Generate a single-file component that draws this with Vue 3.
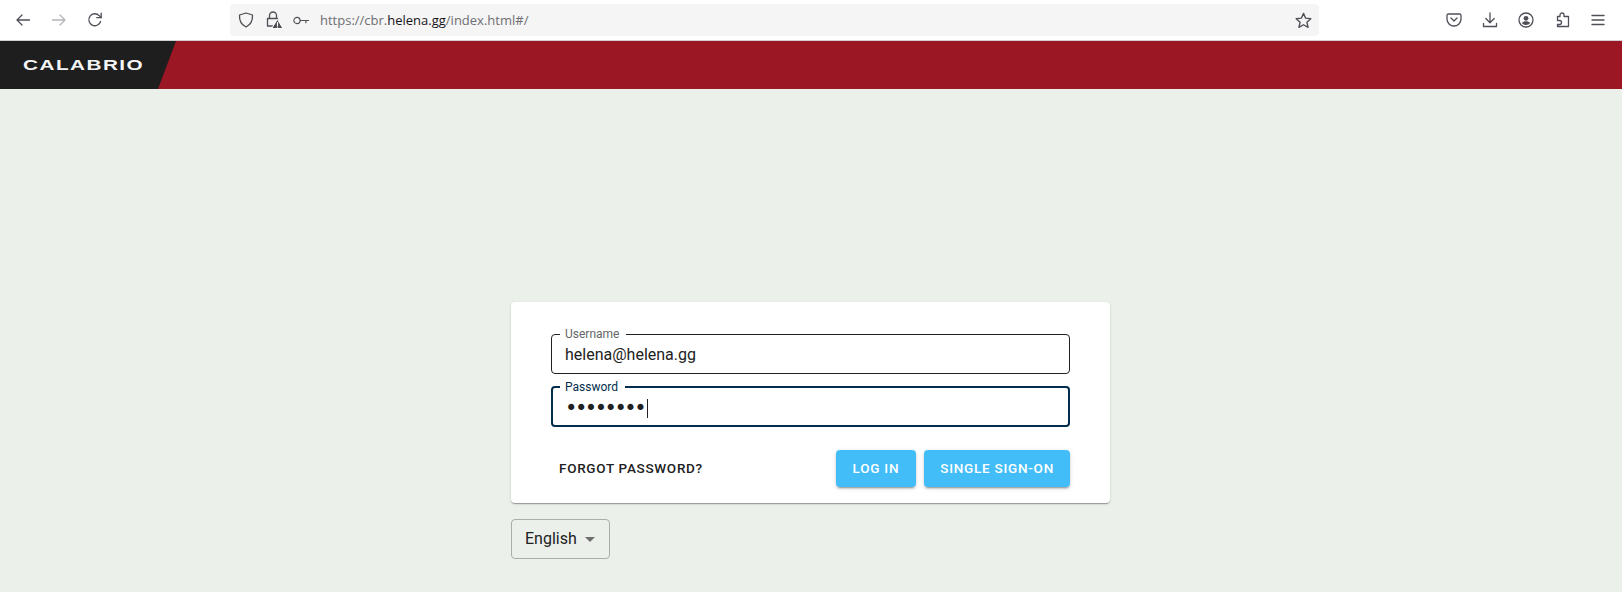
<template>
  <div class="page">
    <div class="toolbar">
      <div class="nav">
        <button class="tb-btn">
          <svg viewBox="0 0 16 16" class="icon"><path d="M14.5 8H2M7 3 2 8l5 5" /></svg>
        </button>
        <button class="tb-btn disabled">
          <svg viewBox="0 0 16 16" class="icon"><path d="M1.5 8H14M9 3l5 5-5 5" /></svg>
        </button>
        <button class="tb-btn">
          <svg viewBox="0 0 16 16" class="icon"><path d="M13.6 9.5A6 6 0 1 1 12.2 3.6L14 5.5" /><path d="M14.2 1.2v4.5H9.800" /></svg>
        </button>
      </div>
      <div class="urlbar">
        <svg viewBox="0 0 16 16" class="icon shield"><path d="M8 1 14.5 3c.3 5.5-1.6 9.600-6.500 12C3.100 12.600 1.200 8.500 1.500 3z" /></svg>
        <svg viewBox="0 0 18 18" class="icon lock">
          <path d="M4.500 7V4.500a3.500 3.500 0 0 1 7 0V7M2.500 7.500h10V15h-10z" />
          <path class="warn" d="M12.500 8.500 18 17.500H7z" />
          <path class="mark" d="M12.500 11.500v3M12.500 15.800v.4" />
        </svg>
        <svg viewBox="0 0 18 10" class="icon key"><circle cx="4.500" cy="5" r="3.500" /><path d="M8 5h9.500M14.500 5v2.500" /></svg>
        <span class="url">https://cbr.<b>helena.gg</b>/index.html#/</span>
        <svg viewBox="0 0 16 16" class="icon star"><path d="m8 1.300 2 4.500 4.900.5-3.700 3.300 1.100 4.800L8 12l-4.300 2.400 1.100-4.800L1.100 6.300 6 5.800z" /></svg>
      </div>
      <div class="tools">
        <svg viewBox="0 0 16 16" class="icon"><path d="M2.500 2h11A1.500 1.500 0 0 1 15 3.500V7a7 7 0 0 1-14 0V3.500A1.500 1.500 0 0 1 2.500 2z" /><path d="m5 6 3 3 3-3" /></svg>
        <svg viewBox="0 0 16 16" class="icon"><path d="M8 1v9.500M3.800 6.500 8 10.700l4.200-4.200M1.500 11.500v3h13v-3" /></svg>
        <svg viewBox="0 0 16 16" class="icon">
          <circle cx="8" cy="8" r="7" />
          <circle class="fill" cx="8" cy="6.300" r="2.400" />
          <path class="fill" d="M3.800 11c1-1.300 2.500-1.800 4.200-1.800s3.200.5 4.200 1.800c-1 1.300-2.500 2-4.200 2s-3.200-.7-4.200-2z" />
        </svg>
        <svg viewBox="0 0 16 16" class="icon"><path d="M6 3.200V3a2 2 0 0 1 4 0v1.500h4.500v10H3.500v-2h2a2 2 0 0 0 0-4h-2v-4H6z" /></svg>
        <svg viewBox="0 0 16 16" class="icon"><path d="M2 3.500h12M2 8h12M2 12.500h12" /></svg>
      </div>
    </div>

    <header class="brandbar">
      <div class="brand"><span class="logo">CALABRIO</span></div>
    </header>

    <main class="content">
      <form class="card" @submit.prevent>
        <fieldset class="field">
          <legend>Username</legend>
          <div class="value">{{ username }}</div>
        </fieldset>
        <fieldset class="field focused">
          <legend>Password</legend>
          <div class="value dots">{{ mask }}<i class="caret"></i></div>
        </fieldset>
        <div class="actions">
          <a class="forgot">FORGOT PASSWORD?</a>
          <div class="buttons">
            <button class="btn login">LOG IN</button>
            <button class="btn sso">SINGLE SIGN-ON</button>
          </div>
        </div>
      </form>
      <div class="lang">
        <span>English</span>
        <i class="arrow"></i>
      </div>
    </main>
  </div>
</template>

<script setup>
const username = 'helena@helena.gg'
const mask = '•'.repeat(8)
</script>

<style>
html, body { margin: 0; height: 100%; background: #ebf0eb; }
</style>

<style scoped>
.page {
  width: 1622px;
  height: 592px;
  overflow: hidden;
  background: #ebf0eb;
  font-family: Roboto, "Liberation Sans", sans-serif;
  color: #212121;
}

.toolbar {
  height: 40px;
  box-sizing: content-box;
  display: flex;
  align-items: center;
  background: #fff;
  border-bottom: 1px solid #cfcfd4;
}
.icon {
  width: 16px;
  height: 16px;
  fill: none;
  stroke: #4f4f57;
  stroke-width: 1.3;
  stroke-linejoin: round;
  stroke-linecap: round;
  flex: none;
}
.icon .fill { fill: #4f4f57; stroke: none; }
.icon .warn { fill: #4f4f57; stroke: #fff; stroke-width: 1; }
.icon .mark { stroke: #fff; stroke-width: 1.1; }
.nav {
  display: flex;
  gap: 20px;
  padding-left: 15px;
  width: 230px;
  box-sizing: border-box;
}
.tb-btn {
  width: 16px;
  height: 16px;
  padding: 0;
  border: 0;
  background: none;
  display: flex;
}
.tb-btn.disabled .icon { stroke: #b4b4b8; }
.urlbar {
  width: 1089px;
  height: 32px;
  display: flex;
  align-items: center;
  background: #f5f5f5;
  border-radius: 4px;
  padding: 0 7px 0 8px;
  box-sizing: border-box;
}
.shield { width: 16px; height: 16px; margin-right: 11px; }
.lock { width: 18px; height: 18px; margin-right: 10px; }
.key { width: 16px; height: 9px; margin-right: 11px; }
.star { width: 17px; height: 17px; margin-left: auto; }
.url {
  font-family: "Open Sans", sans-serif;
  font-size: 13px;
  color: #6e6e73;
}
.url b { font-weight: 400; color: #15141a; }
.tools {
  display: flex;
  align-items: center;
  gap: 20px;
  padding-left: 127px;
}

.brandbar {
  height: 48px;
  background: #9b1724;
}
.brand {
  width: 176px;
  height: 48px;
  background: #1e1e1e;
  clip-path: polygon(0 0, 100% 0, 158px 100%, 0 100%);
  display: flex;
  align-items: center;
}
.logo {
  margin-left: 23px;
  font-family: "Liberation Sans", sans-serif;
  font-weight: 700;
  font-size: 14px;
  letter-spacing: 1px;
  color: #f4f4f4;
  transform: scaleX(1.48);
  transform-origin: left center;
}

.content {
  display: flex;
  flex-direction: column;
  width: 600px;
  margin: 0 auto;
  padding-top: 213px;
}
.card {
  width: 599px;
  height: 201px;
  box-sizing: border-box;
  padding: 25px 40px 0 40px;
  background: #fff;
  border-radius: 4px;
  box-shadow: 0 2px 1px -1px rgba(0,0,0,.2), 0 1px 1px 0 rgba(0,0,0,.14), 0 1px 3px 0 rgba(0,0,0,.12);
}
.field {
  margin: 0 0 6px;
  padding: 0 13px;
  height: 47px;
  box-sizing: border-box;
  border: 1px solid #212121;
  border-radius: 4px;
  min-width: 0;
}
.field legend {
  padding: 0 7px 0 5px;
  margin-left: -5px;
  font-size: 12px;
  line-height: 14px;
  color: #666;
}
.value {
  font-size: 16px;
  line-height: 24px;
  margin-top: 2px;
  color: #212121;
}
.focused {
  border: 2px solid #012e4d;
  padding: 0 12px;
}
.focused legend { color: #012e4d; margin-top: -1px; }
.dots {
  display: flex;
  align-items: center;
  letter-spacing: -2.5px;
  font-family: "DejaVu Sans", sans-serif;
  font-size: 21px;
}
.caret {
  width: 1px;
  height: 19px;
  background: #212121;
  margin-left: 3px;
}
.actions {
  display: flex;
  align-items: center;
  justify-content: space-between;
  margin-top: 23px;
}
.forgot {
  margin: 0 0 2px 8px;
  font-size: 13.5px;
  font-weight: 500;
  letter-spacing: 0.7px;
  color: #212121;
}
.buttons { display: flex; gap: 8px; }
.btn {
  height: 37px;
  padding: 0 16px 2px;
  border: 0;
  border-radius: 4px;
  background: #43bdf8;
  color: #fff;
  font-family: inherit;
  font-size: 13.5px;
  font-weight: 500;
  letter-spacing: 0.75px;
  box-shadow: 0 3px 1px -2px rgba(0,0,0,.2), 0 2px 2px 0 rgba(0,0,0,.14), 0 1px 5px 0 rgba(0,0,0,.12);
}
.login { padding: 0 17px 2px; }
.lang {
  align-self: flex-start;
  margin-top: 16px;
  width: 99px;
  height: 40px;
  box-sizing: border-box;
  display: flex;
  align-items: center;
  gap: 8px;
  padding: 0 0 2px 13px;
  border: 1px solid #a8aea8;
  border-radius: 4px;
  font-size: 16px;
}
.arrow {
  width: 0;
  height: 0;
  border-left: 5px solid transparent;
  border-right: 5px solid transparent;
  border-top: 5px solid #6e6e6e;
  margin-top: 2px;
}
</style>
